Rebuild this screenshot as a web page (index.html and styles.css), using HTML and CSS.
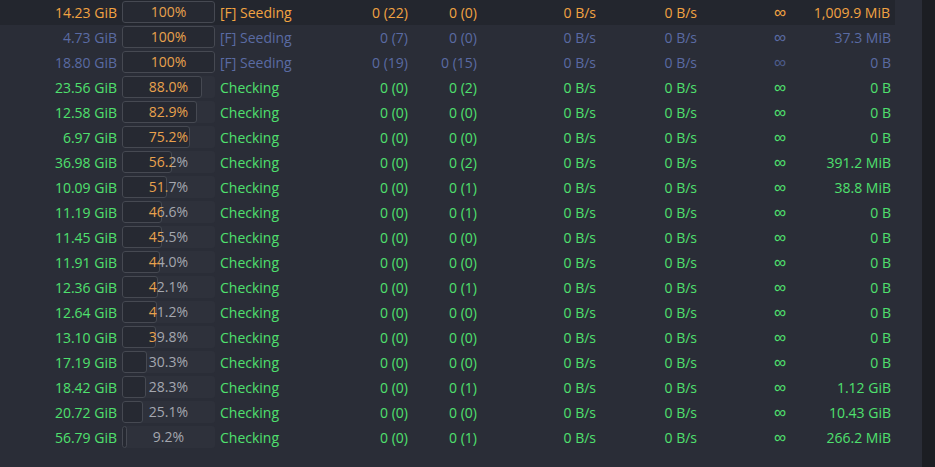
FILE: index.html
```html
<!DOCTYPE html>
<html>
<head>
<meta charset="utf-8">
<link rel="stylesheet" href="styles.css">
</head>
<body>
<div class="app">
  <div class="list">
    <div class="row sel orange">
      <div class="c size">14.23 GiB</div>
      <div class="c prog"><div class="bar"><div class="fill" style="width:93px"></div><span class="pct hi">100%</span></div></div>
      <div class="c status">[F] Seeding</div>
      <div class="c num seeds">0 (22)</div>
      <div class="c num peers">0 (0)</div>
      <div class="c num down">0 B/s</div>
      <div class="c num up">0 B/s</div>
      <div class="c num eta"><span class="inf">∞</span></div>
      <div class="c num amt">1,009.9 MiB</div>
    </div>
    <div class="row blue">
      <div class="c size">4.73 GiB</div>
      <div class="c prog"><div class="bar"><div class="fill" style="width:93px"></div><span class="pct hi">100%</span></div></div>
      <div class="c status">[F] Seeding</div>
      <div class="c num seeds">0 (7)</div>
      <div class="c num peers">0 (0)</div>
      <div class="c num down">0 B/s</div>
      <div class="c num up">0 B/s</div>
      <div class="c num eta"><span class="inf">∞</span></div>
      <div class="c num amt">37.3 MiB</div>
    </div>
    <div class="row blue">
      <div class="c size">18.80 GiB</div>
      <div class="c prog"><div class="bar"><div class="fill" style="width:93px"></div><span class="pct hi">100%</span></div></div>
      <div class="c status">[F] Seeding</div>
      <div class="c num seeds">0 (19)</div>
      <div class="c num peers">0 (15)</div>
      <div class="c num down">0 B/s</div>
      <div class="c num up">0 B/s</div>
      <div class="c num eta dim"><span class="inf">∞</span></div>
      <div class="c num amt">0 B</div>
    </div>
    <div class="row green">
      <div class="c size">23.56 GiB</div>
      <div class="c prog"><div class="bar"><div class="fill" style="width:80px"></div><span class="pct" style="clip-path:inset(0 0 0 80px)">88.0%</span><span class="pct hi" style="clip-path:inset(0 13px 0 0)">88.0%</span></div></div>
      <div class="c status">Checking</div>
      <div class="c num seeds">0 (0)</div>
      <div class="c num peers">0 (2)</div>
      <div class="c num down">0 B/s</div>
      <div class="c num up">0 B/s</div>
      <div class="c num eta"><span class="inf">∞</span></div>
      <div class="c num amt">0 B</div>
    </div>
    <div class="row green">
      <div class="c size">12.58 GiB</div>
      <div class="c prog"><div class="bar"><div class="fill" style="width:75px"></div><span class="pct" style="clip-path:inset(0 0 0 75px)">82.9%</span><span class="pct hi" style="clip-path:inset(0 18px 0 0)">82.9%</span></div></div>
      <div class="c status">Checking</div>
      <div class="c num seeds">0 (0)</div>
      <div class="c num peers">0 (0)</div>
      <div class="c num down">0 B/s</div>
      <div class="c num up">0 B/s</div>
      <div class="c num eta"><span class="inf">∞</span></div>
      <div class="c num amt">0 B</div>
    </div>
    <div class="row green">
      <div class="c size">6.97 GiB</div>
      <div class="c prog"><div class="bar"><div class="fill" style="width:68px"></div><span class="pct" style="clip-path:inset(0 0 0 68px)">75.2%</span><span class="pct hi" style="clip-path:inset(0 25px 0 0)">75.2%</span></div></div>
      <div class="c status">Checking</div>
      <div class="c num seeds">0 (0)</div>
      <div class="c num peers">0 (0)</div>
      <div class="c num down">0 B/s</div>
      <div class="c num up">0 B/s</div>
      <div class="c num eta"><span class="inf">∞</span></div>
      <div class="c num amt">0 B</div>
    </div>
    <div class="row green">
      <div class="c size">36.98 GiB</div>
      <div class="c prog"><div class="bar"><div class="fill" style="width:50px"></div><span class="pct" style="clip-path:inset(0 0 0 50px)">56.2%</span><span class="pct hi" style="clip-path:inset(0 43px 0 0)">56.2%</span></div></div>
      <div class="c status">Checking</div>
      <div class="c num seeds">0 (0)</div>
      <div class="c num peers">0 (2)</div>
      <div class="c num down">0 B/s</div>
      <div class="c num up">0 B/s</div>
      <div class="c num eta"><span class="inf">∞</span></div>
      <div class="c num amt">391.2 MiB</div>
    </div>
    <div class="row green">
      <div class="c size">10.09 GiB</div>
      <div class="c prog"><div class="bar"><div class="fill" style="width:45px"></div><span class="pct" style="clip-path:inset(0 0 0 45px)">51.7%</span><span class="pct hi" style="clip-path:inset(0 48px 0 0)">51.7%</span></div></div>
      <div class="c status">Checking</div>
      <div class="c num seeds">0 (0)</div>
      <div class="c num peers">0 (1)</div>
      <div class="c num down">0 B/s</div>
      <div class="c num up">0 B/s</div>
      <div class="c num eta"><span class="inf">∞</span></div>
      <div class="c num amt">38.8 MiB</div>
    </div>
    <div class="row green">
      <div class="c size">11.19 GiB</div>
      <div class="c prog"><div class="bar"><div class="fill" style="width:40px"></div><span class="pct" style="clip-path:inset(0 0 0 40px)">46.6%</span><span class="pct hi" style="clip-path:inset(0 53px 0 0)">46.6%</span></div></div>
      <div class="c status">Checking</div>
      <div class="c num seeds">0 (0)</div>
      <div class="c num peers">0 (1)</div>
      <div class="c num down">0 B/s</div>
      <div class="c num up">0 B/s</div>
      <div class="c num eta"><span class="inf">∞</span></div>
      <div class="c num amt">0 B</div>
    </div>
    <div class="row green">
      <div class="c size">11.45 GiB</div>
      <div class="c prog"><div class="bar"><div class="fill" style="width:40px"></div><span class="pct" style="clip-path:inset(0 0 0 40px)">45.5%</span><span class="pct hi" style="clip-path:inset(0 53px 0 0)">45.5%</span></div></div>
      <div class="c status">Checking</div>
      <div class="c num seeds">0 (0)</div>
      <div class="c num peers">0 (0)</div>
      <div class="c num down">0 B/s</div>
      <div class="c num up">0 B/s</div>
      <div class="c num eta"><span class="inf">∞</span></div>
      <div class="c num amt">0 B</div>
    </div>
    <div class="row green">
      <div class="c size">11.91 GiB</div>
      <div class="c prog"><div class="bar"><div class="fill" style="width:38px"></div><span class="pct" style="clip-path:inset(0 0 0 38px)">44.0%</span><span class="pct hi" style="clip-path:inset(0 55px 0 0)">44.0%</span></div></div>
      <div class="c status">Checking</div>
      <div class="c num seeds">0 (0)</div>
      <div class="c num peers">0 (0)</div>
      <div class="c num down">0 B/s</div>
      <div class="c num up">0 B/s</div>
      <div class="c num eta"><span class="inf">∞</span></div>
      <div class="c num amt">0 B</div>
    </div>
    <div class="row green">
      <div class="c size">12.36 GiB</div>
      <div class="c prog"><div class="bar"><div class="fill" style="width:36px"></div><span class="pct" style="clip-path:inset(0 0 0 36px)">42.1%</span><span class="pct hi" style="clip-path:inset(0 57px 0 0)">42.1%</span></div></div>
      <div class="c status">Checking</div>
      <div class="c num seeds">0 (0)</div>
      <div class="c num peers">0 (1)</div>
      <div class="c num down">0 B/s</div>
      <div class="c num up">0 B/s</div>
      <div class="c num eta"><span class="inf">∞</span></div>
      <div class="c num amt">0 B</div>
    </div>
    <div class="row green">
      <div class="c size">12.64 GiB</div>
      <div class="c prog"><div class="bar"><div class="fill" style="width:35px"></div><span class="pct" style="clip-path:inset(0 0 0 35px)">41.2%</span><span class="pct hi" style="clip-path:inset(0 58px 0 0)">41.2%</span></div></div>
      <div class="c status">Checking</div>
      <div class="c num seeds">0 (0)</div>
      <div class="c num peers">0 (0)</div>
      <div class="c num down">0 B/s</div>
      <div class="c num up">0 B/s</div>
      <div class="c num eta"><span class="inf">∞</span></div>
      <div class="c num amt">0 B</div>
    </div>
    <div class="row green">
      <div class="c size">13.10 GiB</div>
      <div class="c prog"><div class="bar"><div class="fill" style="width:34px"></div><span class="pct" style="clip-path:inset(0 0 0 34px)">39.8%</span><span class="pct hi" style="clip-path:inset(0 59px 0 0)">39.8%</span></div></div>
      <div class="c status">Checking</div>
      <div class="c num seeds">0 (0)</div>
      <div class="c num peers">0 (0)</div>
      <div class="c num down">0 B/s</div>
      <div class="c num up">0 B/s</div>
      <div class="c num eta"><span class="inf">∞</span></div>
      <div class="c num amt">0 B</div>
    </div>
    <div class="row green">
      <div class="c size">17.19 GiB</div>
      <div class="c prog"><div class="bar"><div class="fill" style="width:25px"></div><span class="pct" style="clip-path:inset(0 0 0 25px)">30.3%</span><span class="pct hi" style="clip-path:inset(0 68px 0 0)">30.3%</span></div></div>
      <div class="c status">Checking</div>
      <div class="c num seeds">0 (0)</div>
      <div class="c num peers">0 (0)</div>
      <div class="c num down">0 B/s</div>
      <div class="c num up">0 B/s</div>
      <div class="c num eta"><span class="inf">∞</span></div>
      <div class="c num amt">0 B</div>
    </div>
    <div class="row green">
      <div class="c size">18.42 GiB</div>
      <div class="c prog"><div class="bar"><div class="fill" style="width:24px"></div><span class="pct" style="clip-path:inset(0 0 0 24px)">28.3%</span><span class="pct hi" style="clip-path:inset(0 69px 0 0)">28.3%</span></div></div>
      <div class="c status">Checking</div>
      <div class="c num seeds">0 (0)</div>
      <div class="c num peers">0 (1)</div>
      <div class="c num down">0 B/s</div>
      <div class="c num up">0 B/s</div>
      <div class="c num eta"><span class="inf">∞</span></div>
      <div class="c num amt">1.12 GiB</div>
    </div>
    <div class="row green">
      <div class="c size">20.72 GiB</div>
      <div class="c prog"><div class="bar"><div class="fill" style="width:21px"></div><span class="pct" style="clip-path:inset(0 0 0 21px)">25.1%</span><span class="pct hi" style="clip-path:inset(0 72px 0 0)">25.1%</span></div></div>
      <div class="c status">Checking</div>
      <div class="c num seeds">0 (0)</div>
      <div class="c num peers">0 (0)</div>
      <div class="c num down">0 B/s</div>
      <div class="c num up">0 B/s</div>
      <div class="c num eta"><span class="inf">∞</span></div>
      <div class="c num amt">10.43 GiB</div>
    </div>
    <div class="row green">
      <div class="c size">56.79 GiB</div>
      <div class="c prog"><div class="bar"><div class="fill" style="width:5px"></div><span class="pct" style="clip-path:inset(0 0 0 5px)">9.2%</span><span class="pct hi" style="clip-path:inset(0 88px 0 0)">9.2%</span></div></div>
      <div class="c status">Checking</div>
      <div class="c num seeds">0 (0)</div>
      <div class="c num peers">0 (1)</div>
      <div class="c num down">0 B/s</div>
      <div class="c num up">0 B/s</div>
      <div class="c num eta"><span class="inf">∞</span></div>
      <div class="c num amt">266.2 MiB</div>
    </div>
  </div>
  <div class="scroll"></div>
</div>
</body>
</html>
```

FILE: styles.css
```css
html, body {
  margin: 0;
  padding: 0;
  height: 100%;
  background: #2a2d37;
}
body {
  font-family: "Open Sans", "Noto Sans", "DejaVu Sans", sans-serif;
  font-size: 14px;
  overflow: hidden;
}
.app {
  display: flex;
  height: 467px;
  width: 935px;
}
.list {
  width: 922px;
  display: flex;
  flex-direction: column;
}
.scroll {
  width: 13px;
  background: #1c1e23;
}
.row {
  display: grid;
  grid-template-columns: 122px 96px 122px 73px 69px 119px 101px 89px 105px;
  width: 896px;
  height: 25px;
  align-items: center;
}
.row.sel {
  background: #23262e;
  width: 895px;
  grid-template-columns: 122px 96px 122px 73px 69px 119px 101px 89px 104px;
}
.c {
  white-space: nowrap;
  line-height: 25px;
  height: 25px;
}
.size {
  text-align: right;
  padding-right: 5px;
}
.num {
  text-align: right;
  padding-right: 5px;
}
.status {
  padding-left: 2px;
}
.inf {
  font-family: "Liberation Sans", sans-serif;
  font-size: 17px;
  line-height: 25px;
}
.prog {
  height: 25px;
  padding-top: 1px;
  box-sizing: border-box;
}
.bar {
  position: relative;
  width: 93px;
  height: 22px;
  background: #2e313b;
  border-radius: 3px;
  overflow: hidden;
}
.fill {
  height: 22px;
  box-sizing: border-box;
  background: #262932;
  border: 1px solid #464952;
  border-radius: 3px;
}
.pct {
  position: absolute;
  inset: 0;
  display: flex;
  align-items: center;
  justify-content: center;
  line-height: 22px;
  color: #a4a7af;
}
.pct.hi {
  color: #e9a24d;
}
.orange .c { color: #f2a342; }
.blue .c { color: #5a6ba3; }
.green .c { color: #4fe06e; }
.blue .eta.dim { color: #4d5c8c; }
```
